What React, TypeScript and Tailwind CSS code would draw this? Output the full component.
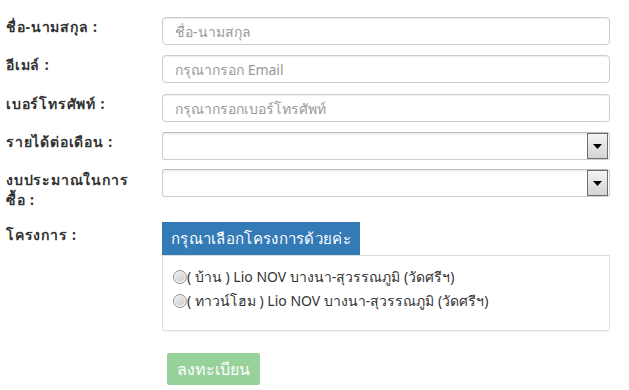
const font = { fontFamily: '"Noto Sans", "Open Sans", Tahoma, sans-serif' };

function Label({ children, tall }: { children: React.ReactNode; tall?: boolean }) {
  return (
    <div
      className={
        tall
          ? "w-[156px] shrink-0 pt-[1px] pr-2 text-[14px] leading-[20px] font-bold tracking-[0.8px] text-[#333]"
          : "w-[156px] shrink-0 pt-[1px] pr-2 text-[14px] leading-[18px] font-bold tracking-[0.8px] text-[#333]"
      }
    >
      {children}
    </div>
  );
}

function TextInput({ placeholder }: { placeholder: string }) {
  return (
    <input
      placeholder={placeholder}
      className="h-[28px] w-full rounded-[4px] border border-[#ccc] bg-white px-[12px] text-[14px] text-[#555] shadow-[inset_0_1px_1px_rgba(0,0,0,0.075)] outline-none placeholder:text-[#999]"
    />
  );
}

function FakeSelect() {
  return (
    <div className="flex h-[28px] w-full items-center justify-end rounded-[3px] border border-[#cfcfcf] border-t-[#bbb] bg-white pr-[1px] shadow-[inset_0_2px_2px_rgba(0,0,0,0.06)]">
      <div className="flex h-[26px] w-[21px] items-center justify-center border border-[#6d6d6d] bg-gradient-to-b from-[#f4f4f4] to-[#d4d4d4]">
        <svg width="9" height="5" viewBox="0 0 9 5">
          <path d="M0 0h9L4.5 5z" fill="#000" />
        </svg>
      </div>
    </div>
  );
}

function Radio() {
  return (
    <span className="inline-block h-[14px] w-[14px] shrink-0 rounded-full border border-[#959595] bg-gradient-to-br from-[#f0f0f0] to-[#cdcdcd] shadow-[inset_0_0_0_1px_#f7f7f7]" />
  );
}

export default function App() {
  return (
    <div className="min-h-[390px] w-[629px] bg-white pl-[6px] pt-[17px]" style={font}>
      <div className="flex w-[604px] flex-col">
        <div className="mb-[10px] flex">
          <Label>ชื่อ-นามสกุล :</Label>
          <TextInput placeholder="ชื่อ-นามสกุล" />
        </div>
        <div className="mb-[11px] flex">
          <Label>อีเมล์ :</Label>
          <TextInput placeholder="กรุณากรอก Email" />
        </div>
        <div className="mb-[10px] flex">
          <Label>เบอร์โทรศัพท์ :</Label>
          <TextInput placeholder="กรุณากรอกเบอร์โทรศัพท์" />
        </div>
        <div className="mb-[9px] flex">
          <Label>รายได้ต่อเดือน :</Label>
          <FakeSelect />
        </div>
        <div className="mb-[12px] flex">
          <Label tall>
            งบประมาณในการ
            <br />
            ซื้อ :
          </Label>
          <FakeSelect />
        </div>
        <div className="flex">
          <div className="pt-[3px]">
            <Label>โครงการ :</Label>
          </div>
          <div className="flex w-full flex-col">
            <div className="flex">
              <div className="flex h-[33px] items-center bg-[#337ab7] px-[9px] text-[15px] tracking-[0.3px] text-white">
                กรุณาเลือกโครงการด้วยค่ะ
              </div>
            </div>
            <div className="h-[76px] rounded-b-[3px] border border-[#ddd] px-[10px] pt-[9px] text-[14px] leading-[24px] text-[#333] shadow-[0_1px_1px_rgba(0,0,0,0.05)]">
              <label className="flex items-center">
                <Radio />
                <span>( บ้าน ) Lio NOV บางนา-สุวรรณภูมิ (วัดศรีฯ)</span>
              </label>
              <label className="flex items-center">
                <Radio />
                <span>( ทาวน์โฮม ) Lio NOV บางนา-สุวรรณภูมิ (วัดศรีฯ)</span>
              </label>
            </div>
            <div className="mt-[22px] pl-[5px]">
              <button className="h-[32px] rounded-[2px] bg-[#98d29b] px-[10px] text-[16px] text-white">
                ลงทะเบียน
              </button>
            </div>
          </div>
        </div>
      </div>
    </div>
  );
}
